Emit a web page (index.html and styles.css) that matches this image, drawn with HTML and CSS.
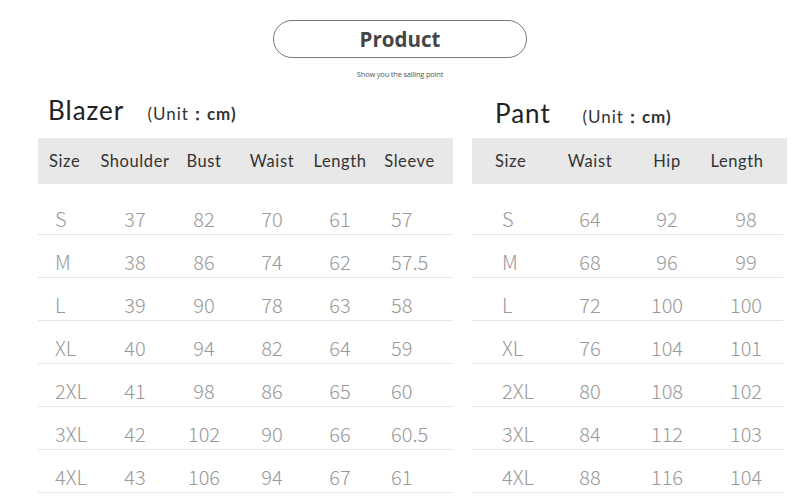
FILE: index.html
```html
<!DOCTYPE html>
<html lang="en">
<head>
  <meta charset="UTF-8" />
  <title>Size Chart</title>
  <link rel="stylesheet" href="styles.css">
</head>
<body>
  <div class="head">
    <div class="pill">Product</div>
    <div class="tagline">Show you the salling point</div>
  </div>

  <div class="tables">
    <div class="chart blazer">
      <div class="title">Blazer <span class="unit">(Unit<b>：cm)</b></span></div>
      <div class="grid">
        <div class="hrow">
          <span>Size</span><span>Shoulder</span><span>Bust</span><span>Waist</span><span>Length</span><span>Sleeve</span>
        </div>
        <div class="row"><span>S</span><span>37</span><span>82</span><span>70</span><span>61</span><span>57</span></div>
        <div class="row"><span>M</span><span>38</span><span>86</span><span>74</span><span>62</span><span>57.5</span></div>
        <div class="row"><span>L</span><span>39</span><span>90</span><span>78</span><span>63</span><span>58</span></div>
        <div class="row"><span>XL</span><span>40</span><span>94</span><span>82</span><span>64</span><span>59</span></div>
        <div class="row"><span>2XL</span><span>41</span><span>98</span><span>86</span><span>65</span><span>60</span></div>
        <div class="row"><span>3XL</span><span>42</span><span>102</span><span>90</span><span>66</span><span>60.5</span></div>
        <div class="row"><span>4XL</span><span>43</span><span>106</span><span>94</span><span>67</span><span>61</span></div>
      </div>
    </div>

    <div class="chart pant">
      <div class="title">Pant <span class="unit">(Unit<b>：cm)</b></span></div>
      <div class="grid">
        <div class="hrow">
          <span>Size</span><span>Waist</span><span>Hip</span><span>Length</span>
        </div>
        <div class="row"><span>S</span><span>64</span><span>92</span><span>98</span></div>
        <div class="row"><span>M</span><span>68</span><span>96</span><span>99</span></div>
        <div class="row"><span>L</span><span>72</span><span>100</span><span>100</span></div>
        <div class="row"><span>XL</span><span>76</span><span>104</span><span>101</span></div>
        <div class="row"><span>2XL</span><span>80</span><span>108</span><span>102</span></div>
        <div class="row"><span>3XL</span><span>84</span><span>112</span><span>103</span></div>
        <div class="row"><span>4XL</span><span>88</span><span>116</span><span>104</span></div>
      </div>
    </div>
  </div>
</body>
</html>
```

FILE: styles.css
```css
body {
  margin: 0;
  background: #fff;
  font-family: Lato, "Noto Sans", sans-serif;
  color: #333;
  overflow: hidden;
}

.head {
  display: flex;
  flex-direction: column;
  align-items: center;
  padding-top: 20px;
}

.pill {
  width: 252px;
  height: 36px;
  border: 1.5px solid #777;
  border-radius: 20px;
  display: flex;
  align-items: center;
  justify-content: center;
  font-family: "Open Sans", sans-serif;
  font-weight: 700;
  font-size: 20.5px;
  color: #454545;
}

.tagline {
  margin-top: 11px;
  font-family: "Open Sans", sans-serif;
  font-size: 7.5px;
  color: #555;
  letter-spacing: -0.2px;
}

.tables {
  display: flex;
  gap: 19px;
  margin-left: 38px;
  margin-top: 11px;
}

.title {
  height: 48px;
  font-size: 26px;
  font-weight: 400;
  letter-spacing: 1px;
  color: #222;
  line-height: 40px;
}

.blazer .title { padding-left: 10px; }
.pant .title { padding-left: 23px; padding-top: 3px; height: 45px; }

.unit {
  font-size: 17px;
  letter-spacing: 1px;
  color: #333;
  margin-left: 16px;
}

.pant .unit { margin-left: 24px; }

.unit b {
  font-weight: 700;
  font-size: 17px;
}

.grid {
  display: flex;
  flex-direction: column;
}

.hrow {
  display: grid;
  height: 46px;
  align-items: center;
  background: #e8e8e8;
  font-size: 16.5px;
  letter-spacing: 0.6px;
  color: #333;
  margin-bottom: 8px;
}

.row {
  display: grid;
  height: 42px;
  align-items: end;
  border-bottom: 1.5px solid #e6e6e6;
  font-family: "Noto Sans CJK SC Light", "Noto Sans CJK SC DemiLight", "Noto Sans CJK SC", sans-serif;
  font-weight: 300;
  font-size: 20px;
  line-height: 31px;
  color: #999;
}

.row span, .hrow span { text-align: center; }

.blazer .grid { width: 415px; }
.blazer .hrow, .blazer .row { grid-template-columns: 62px 70px 68px 68px 68px 79px; }
.blazer .hrow span:first-child { text-align: left; padding-left: 11px; }
.blazer .row span:first-child { text-align: left; padding-left: 17px; }
.blazer .row span:last-child { text-align: left; padding-left: 17px; }
.blazer .hrow span:last-child { padding-right: 8px; }

.pant .grid { width: 315px; }
.pant .hrow, .pant .row { grid-template-columns: 79px 78px 76px 82px; }
.pant .hrow span:first-child { text-align: left; padding-left: 23px; }
.pant .row span:first-child { text-align: left; padding-left: 30px; }
.pant .hrow span:last-child { padding-right: 18px; }
.pant .row { margin-right: 4px; }
```
